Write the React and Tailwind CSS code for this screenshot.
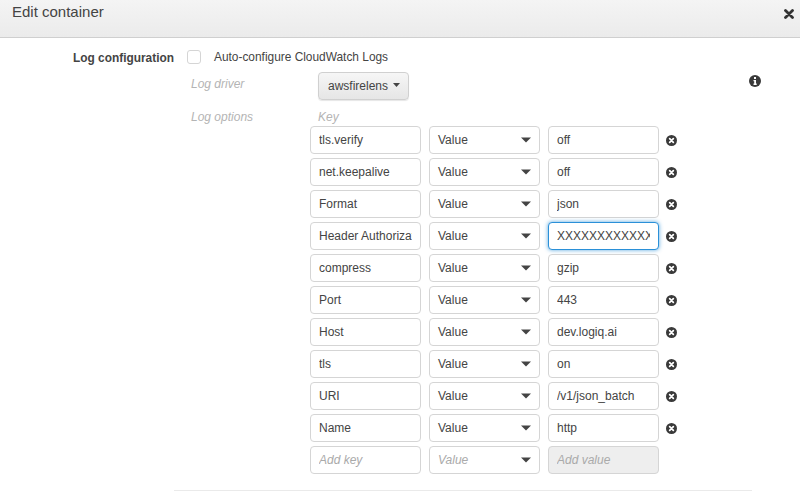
const rows = [
  ["tls.verify", "off"],
  ["net.keepalive", "off"],
  ["Format", "json"],
  ["Header Authorization", "XXXXXXXXXXXXXXXXXXXX", true],
  ["compress", "gzip"],
  ["Port", "443"],
  ["Host", "dev.logiq.ai"],
  ["tls", "on"],
  ["URI", "/v1/json_batch"],
  ["Name", "http"],
];

function Box({ className, children }) {
  return (
    <div className={`h-[28px] w-[111px] shrink-0 rounded-[4px] border px-[8px] text-[12px] leading-[26px] ${className}`}>
      <div className="overflow-hidden whitespace-nowrap">{children}</div>
    </div>
  );
}

function Caret() {
  return (
    <svg width="10" height="6" viewBox="0 0 10 6" className="shrink-0">
      <path d="M0 0.5h10L5 5.5z" fill="#444" />
    </svg>
  );
}

function RemoveIcon() {
  return (
    <svg width="11" height="11" viewBox="0 0 12 12" className="ml-[7px] mt-[1px] shrink-0">
      <circle cx="6" cy="6" r="6" fill="#3a3a3a" />
      <path d="M4 4l4 4M8 4l-4 4" stroke="#fff" strokeWidth="1.9" strokeLinecap="round" />
    </svg>
  );
}

function InfoIcon() {
  return (
    <svg width="12" height="12" viewBox="0 0 12 12">
      <circle cx="6" cy="6" r="6" fill="#3a3a3a" />
      <rect x="5" y="2" width="2" height="2" fill="#fff" />
      <path d="M4.5 5h2.5v3.5h.7V10H4.5V8.5h.7V6.3h-.7z" fill="#fff" />
    </svg>
  );
}

function Select({ placeholder }) {
  return (
    <div className={`flex h-[28px] w-[111px] shrink-0 items-center justify-between rounded-[4px] border border-[#d5d5d5] bg-white pl-[8px] pr-[8px] text-[12px] ${placeholder ? "italic text-[#aaa]" : "text-[#444]"}`}>
      <span>Value</span>
      <Caret />
    </div>
  );
}

export default function App() {
  return (
    <div className="h-[503px] w-[800px] overflow-hidden bg-white text-[12px] text-[#444]" style={{ fontFamily: '"Liberation Sans", Arial, sans-serif' }}>
      <header className="flex h-[38px] items-start justify-between border-b border-[#cfcfcf] bg-gradient-to-b from-[#f4f4f4] to-[#ebebeb] pl-[12px] pr-[6px]">
        <h1 className="mt-[3px] text-[15px] leading-[18px] font-normal text-[#444]">Edit container</h1>
        <svg width="10" height="10" viewBox="0 0 10 10" className="mt-[9px]">
          <path d="M1.5 1.5l7 7M8.5 1.5l-7 7" stroke="#333" strokeWidth="2.8" strokeLinecap="round" />
        </svg>
      </header>

      <main className="flex pt-[12px]">
        <div className="w-[174px] shrink-0 pt-[1px] text-right text-[11.9px] leading-[14px] font-bold text-[#444]">Log configuration</div>
        <div className="ml-[13px] flex-1">
          <div className="flex h-[14px] items-center">
            <span className="h-[14px] w-[14px] rounded-[3px] border border-[#d5d5d5] bg-white" />
            <span className="ml-[13px] pt-[1px] text-[11.9px] text-[#444]">Auto-configure CloudWatch Logs</span>
          </div>

          <div className="mt-[8px] flex h-[28px] items-start">
            <span className="mt-[5px] w-[131px] pl-[4px] text-[12px] leading-[14px] italic text-[#b4b4b4]">Log driver</span>
            <button className="flex h-[28px] w-[91px] items-center rounded-[4px] border border-[#d0d0d0] bg-gradient-to-b from-[#f6f6f6] to-[#e6e6e6] pl-[9px] text-[12px] text-[#444] shadow-[0_1px_1px_rgba(0,0,0,0.1)]">
              <span>awsfirelens</span>
              <svg width="7" height="4" viewBox="0 0 7 4" className="ml-[5px] mb-[2px]">
                <path d="M0 0h7L3.5 4z" fill="#444" />
              </svg>
            </button>
            <span className="ml-auto mr-[39px] mt-[3px]"><InfoIcon /></span>
          </div>

          <div className="mt-[10px] flex h-[16px] items-start">
            <span className="w-[131px] pl-[4px] text-[12px] leading-[14px] italic text-[#b4b4b4]">Log options</span>
            <span className="text-[12px] leading-[14px] italic text-[#b4b4b4]">Key</span>
          </div>

          <div className="ml-[123px] flex flex-col gap-[4px]">
            {rows.map(([k, v, focus]) => (
              <div key={k} className="flex items-center gap-[8px]">
                <Box className="border-[#d5d5d5] bg-white text-[#444]">{k}</Box>
                <Select />
                <div className="flex items-center">
                  <Box className={`bg-white text-[#444] ${focus ? "border-[#2a90d8] shadow-[0_0_4px_rgba(42,144,216,0.8)]" : "border-[#d5d5d5]"}`}>{v}</Box>
                  <RemoveIcon />
                </div>
              </div>
            ))}
            <div className="flex items-center gap-[8px]">
              <Box className="border-[#d5d5d5] bg-white italic text-[#aaa]">Add key</Box>
              <Select placeholder />
              <Box className="border-[#d5d5d5] bg-[#eeeeee] italic text-[#aaa]">Add value</Box>
            </div>
          </div>
        </div>
      </main>

      <div className="ml-[174px] mt-[16px] h-px w-[578px] bg-[#eaeaea]" />
    </div>
  );
}
